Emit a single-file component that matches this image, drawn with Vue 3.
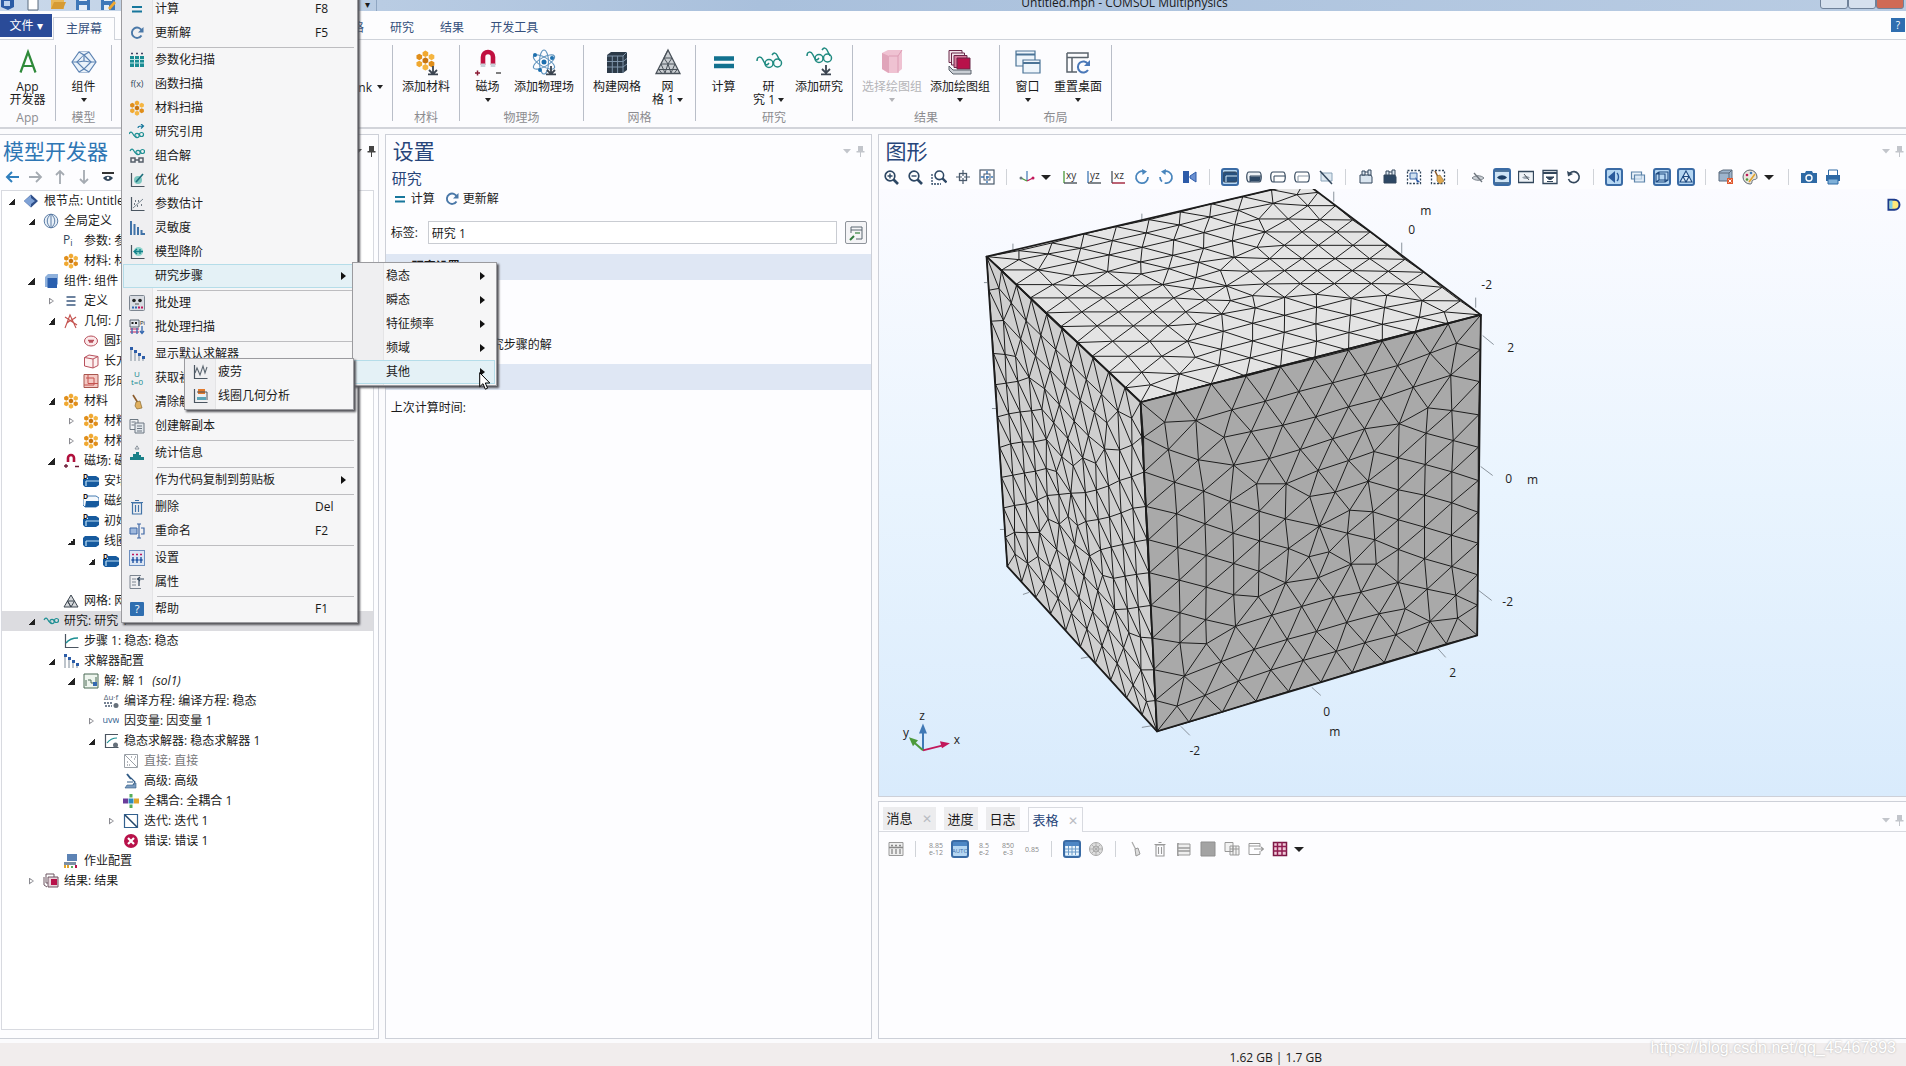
<template>
  <div class="app">
    <!-- Title bar -->
    <header class="titlebar">
      <div class="quick">
        <svg v-for="q in quick" :key="q" class="ic" viewBox="0 0 16 16" v-html="icons[q]"></svg>
      </div>
      <span class="quick-more">▾</span>
      <h1>Untitled.mph - COMSOL Multiphysics</h1>
      <div class="win-btns">
        <button aria-label="最小化"></button>
        <button aria-label="还原"></button>
        <button class="close" aria-label="关闭"></button>
      </div>
    </header>

    <!-- Ribbon tabs -->
    <nav class="tabs">
      <button class="file">文件 ▾</button>
      <button v-for="(t, i) in tabs" :key="t" :class="['tab', { active: i === 0 }]">{{ t }}</button>
      <button class="help" aria-label="帮助">?</button>
    </nav>

    <!-- Ribbon -->
    <div class="ribbon">
      <section v-for="(g, i) in ribbon" :key="i" :class="['group', { wide: g.wide }]">
        <div class="group-body">
          <button v-for="b in g.items" :key="b.lines[0]" :class="['big', { off: b.off }]" :disabled="b.off">
            <svg v-if="b.icon" class="ic26" viewBox="0 0 26 26" v-html="icons[b.icon]"></svg>
            <span v-for="(l, n) in b.lines" :key="n" class="line">{{ l }}<i v-if="b.inline && n === 1" class="caret"></i></span>
            <i v-if="b.drop" class="caret below"></i>
          </button>
        </div>
        <div class="group-name">{{ g.name }}</div>
      </section>
    </div>

    <main class="work">
      <!-- Model builder -->
      <section class="panel">
        <div class="panel-head">
          <h2 class="light">模型开发器</h2>
          <svg class="pins dark" viewBox="0 0 24 12" v-html="icons.pins"></svg>
        </div>
        <div class="toolbar">
          <button v-for="n in ['left', 'right', 'up', 'down', 'show']" :key="n" class="tool" :aria-label="n">
            <svg class="ic" viewBox="0 0 16 16" v-html="icons[n]"></svg>
          </button>
        </div>
        <ul class="tree">
          <li v-for="(n, i) in tree" :key="i" :class="{ sel: n[4] === 'sel', off: n[4] === 'off' }" :style="{ paddingLeft: n[0] * 20 + 2 + 'px' }">
            <i :class="['fold', n[1]]"></i>
            <svg class="ic" viewBox="0 0 16 16" v-html="icons[n[2]]"></svg>
            <span>{{ n[3] }}</span><em v-if="n[2] === 'sol'">(sol1)</em>
          </li>
        </ul>
      </section>

      <!-- Settings -->
      <section class="panel settings">
        <div class="panel-head">
          <h2>设置</h2>
          <svg class="pins" viewBox="0 0 24 12" v-html="icons.pins"></svg>
        </div>
        <h3>研究</h3>
        <div class="actions">
          <button><svg class="ic" viewBox="0 0 16 16" v-html="icons.eq"></svg>计算</button>
          <button><svg class="ic" viewBox="0 0 16 16" v-html="icons.refresh"></svg>更新解</button>
        </div>
        <div class="label-row">
          <label for="study-label">标签:</label>
          <input id="study-label" v-model="label" type="text">
          <button class="rename" aria-label="标签选项">
            <svg class="ic" viewBox="0 0 16 16" v-html="icons.labelopt"></svg>
          </button>
        </div>
        <h4>研究设置</h4>
        <div class="checks">
          <label v-for="c in checks" :key="c.text"><input v-model="c.on" type="checkbox">{{ c.text }}</label>
        </div>
        <h4>信息</h4>
        <p class="info">上次计算时间:</p>
      </section>

      <div class="right">
        <!-- Graphics -->
        <section class="panel graphics">
          <div class="panel-head">
            <h2>图形</h2>
            <svg class="pins" viewBox="0 0 24 12" v-html="icons.pins"></svg>
          </div>
          <div class="toolbar">
            <template v-for="(n, i) in gfxTools" :key="i">
              <i v-if="n === '|'" class="tsep"></i>
              <i v-else-if="n === 'v'" class="tdrop"></i>
              <button v-else class="tool" :aria-label="n">
                <svg :class="['ic', { on: gfxOn.includes(n) }]" viewBox="0 0 16 16" v-html="icons[n]"></svg>
              </button>
            </template>
          </div>
          <div class="canvas">
            <svg viewBox="878 189 1028 606">
              <g stroke="#8a939c" stroke-width="1">
                <line v-for="(t, i) in ticks" :key="i" :x1="t[0]" :y1="t[1]" :x2="t[2]" :y2="t[3]" />
              </g>
              <g v-for="f in meshFaces" :key="f.fill" stroke="#1c1c1c" stroke-linejoin="round">
                <path :d="f.outline" :fill="f.fill" stroke="none" />
                <path :d="f.lines" fill="none" stroke-width="1" />
                <path :d="f.outline" fill="none" stroke-width="1.8" />
              </g>
              <g font-size="12" fill="#222" text-anchor="middle">
                <text v-for="(t, i) in axisText" :key="i" :x="t[1]" :y="t[2] + 4">{{ t[0] }}</text>
              </g>
              <!-- Axis triad -->
              <g stroke-width="2">
                <path d="M922 750V732" stroke="#3f78b5" />
                <path d="M922 750l20-5" stroke="#c2185b" />
                <path d="M922 750l-8-7" stroke="#4c9a3a" />
              </g>
              <path d="M922 723l4 10h-8z" fill="#3f78b5" />
              <path d="M949 743l-10-2 2 7z" fill="#c2185b" />
              <path d="M908 737l9 3-5 6z" fill="#4c9a3a" />
              <!-- Legend toggle -->
              <path d="M1888 199h6a5 5 0 0 1 0 10h-6z" fill="#ffe97a" stroke="#1b3a8c" stroke-width="2" />
              <path d="M1889 200h3v8h-3z" fill="#7fd0e8" />
            </svg>
          </div>
        </section>

        <!-- Messages / table -->
        <section class="panel output">
          <div class="out-tabs">
            <button v-for="t in outTabs" :key="t.name" :class="{ active: t.name === '表格' }">{{ t.name }}<span v-if="t.close">✕</span></button>
            <svg class="pins" viewBox="0 0 24 12" v-html="icons.pins"></svg>
          </div>
          <div class="toolbar">
            <template v-for="(n, i) in outTools" :key="i">
              <i v-if="n === '|'" class="tsep"></i>
              <i v-else-if="n === 'v'" class="tdrop"></i>
              <button v-else class="tool" :aria-label="n">
                <svg :class="['ic', { on: n === 'tauto' || n === 'tgrid' }]" viewBox="0 0 16 16" v-html="icons[n]"></svg>
              </button>
            </template>
          </div>
        </section>
      </div>
    </main>

    <footer class="status">
      <span>1.62 GB | 1.7 GB</span>
      <small>https://blog.csdn.net/qq_45467893</small>
    </footer>

    <!-- Context menu and its submenus -->
    <ul class="menu main-menu">
      <template v-for="(m, i) in menu" :key="i">
        <li v-if="m === '-'" class="msep"></li>
        <li v-else>
          <button :class="{ hot: m[1] === '研究步骤' }">
            <svg class="ic" viewBox="0 0 16 16" v-html="icons[m[0]]"></svg>
            <span class="mtext">{{ m[1] }}</span>
            <span v-if="m[2] && m[2] !== '>'" class="key">{{ m[2] }}</span>
            <i v-if="m[2] === '>'" class="more"></i>
          </button>
        </li>
      </template>
    </ul>
    <ul class="menu step-menu">
      <li v-for="s in steps" :key="s">
        <button :class="{ hot: s === '其他' }">
          <svg class="ic" viewBox="0 0 16 16"></svg>
          <span class="mtext">{{ s }}</span>
          <i class="more"></i>
        </button>
      </li>
    </ul>
    <ul class="menu other-menu">
      <li><button><svg class="ic" viewBox="0 0 16 16" v-html="icons.fatigue"></svg><span class="mtext">疲劳</span></button></li>
      <li><button><svg class="ic" viewBox="0 0 16 16" v-html="icons.coilgeo"></svg><span class="mtext">线圈几何分析</span></button></li>
    </ul>
    <svg class="pointer" viewBox="0 0 12 18"><path d="M.7.7v14l3.300-3 2.300 5.500 2.300-1-2.300-5.200h4.500z" fill="#fff" stroke="#000" /></svg>
  </div>
</template>

<script setup>
import { ref } from 'vue';

const label = ref('研究 1');
const checks = ref([
  { text: '生成默认绘图', on: true },
  { text: '生成收敛图', on: true },
  { text: '存储所有中间研究步骤的解', on: false }
]);

const quick = ['logo', 'doc', 'folder', 'save', 'saveas'];
const tabs = ['主屏幕', '定义', '几何', '材料', '物理场', '网格', '研究', '结果', '开发工具'];

const ribbon = [
  { name: 'App', items: [{ icon: 'bApp', lines: ['App', '开发器'] }] },
  { name: '模型', items: [{ icon: 'bComp', lines: ['组件'], drop: true }] },
  { name: '', wide: true, items: [{ lines: ['LiveLink'], drop: true }] },
  { name: '材料', items: [{ icon: 'bMat', lines: ['添加材料'] }] },
  { name: '物理场', items: [{ icon: 'bMagnet', lines: ['磁场'], drop: true }, { icon: 'bAtom', lines: ['添加物理场'] }] },
  { name: '网格', items: [{ icon: 'bBuild', lines: ['构建网格'] }, { icon: 'bMesh', lines: ['网', '格 1'], inline: true }] },
  { name: '研究', items: [{ icon: 'bEq', lines: ['计算'] }, { icon: 'bStudy', lines: ['研', '究 1'], inline: true }, { icon: 'bAddStudy', lines: ['添加研究'] }] },
  { name: '结果', items: [{ icon: 'bSel', lines: ['选择绘图组'], drop: true, off: true }, { icon: 'bPlot', lines: ['添加绘图组'], drop: true }] },
  { name: '布局', items: [{ icon: 'bWin', lines: ['窗口'], drop: true }, { icon: 'bReset', lines: ['重置桌面'], drop: true }] }
];

// [level, fold, icon, text, state]
const tree = [
  [0, 'open', 'root', '根节点: Untitled.mph (root)'],
  [1, 'open', 'globe', '全局定义'],
  [2, '', 'pi', '参数: 参数 1'],
  [2, '', 'mat', '材料: 材料'],
  [1, 'open', 'comp', '组件: 组件 1 (comp1)'],
  [2, 'shut', 'defs', '定义'],
  [2, 'open', 'geom', '几何: 几何 1'],
  [3, '', 'torus', '圆环: 圆环 1'],
  [3, '', 'block', '长方体: 长方体 1'],
  [3, '', 'union', '形成联合体'],
  [2, 'open', 'mat', '材料'],
  [3, 'shut', 'mat', '材料: 材料 1'],
  [3, 'shut', 'mat', '材料: 材料 2'],
  [2, 'open', 'magnet', '磁场: 磁场 (mf)'],
  [3, '', 'domD', '安培定律 1'],
  [3, '', 'bndD', '磁绝缘 1'],
  [3, '', 'domD', '初始值 1'],
  [3, 'open', 'dom', '线圈 1'],
  [4, 'open', 'domD', '几何分析 1'],
  [5, '', 'dom', '输入 1'],
  [2, '', 'mesh', '网格: 网格 1'],
  [1, 'open', 'study', '研究: 研究 1', 'sel'],
  [2, '', 'step', '步骤 1: 稳态: 稳态'],
  [2, 'open', 'solver', '求解器配置'],
  [3, 'open', 'sol', '解: 解 1'],
  [4, '', 'compile', '编译方程: 编译方程: 稳态'],
  [4, 'shut', 'depvar', '因变量: 因变量 1'],
  [4, 'open', 'statsol', '稳态求解器: 稳态求解器 1'],
  [5, '', 'direct', '直接: 直接', 'off'],
  [5, '', 'adv', '高级: 高级'],
  [5, '', 'coupled', '全耦合: 全耦合 1'],
  [5, 'shut', 'iter', '迭代: 迭代 1'],
  [5, '', 'error', '错误: 错误 1'],
  [2, '', 'job', '作业配置'],
  [1, 'shut', 'results', '结果: 结果']
];

const menu = [
  ['eq', '计算', 'F8'], ['refresh', '更新解', 'F5'], '-',
  ['sweep', '参数化扫描'], ['fx', '函数扫描'], ['mat', '材料扫描'], ['studyref', '研究引用'],
  ['combine', '组合解'], ['optim', '优化'], ['estim', '参数估计'], ['sens', '灵敏度'],
  ['reduce', '模型降阶'], ['', '研究步骤', '>'], '-',
  ['batch', '批处理'], ['batchsweep', '批处理扫描'], '-',
  ['solver', '显示默认求解器'], ['getinit', '获取初始值'], ['broom', '清除解'], ['copy', '创建解副本'], '-',
  ['stats', '统计信息'], '-',
  ['', '作为代码复制到剪贴板', '>'], '-',
  ['trash', '删除', 'Del'], ['rename', '重命名', 'F2'], '-',
  ['setting', '设置'], ['props', '属性'], '-',
  ['help', '帮助', 'F1']
];
const steps = ['稳态', '瞬态', '特征频率', '频域', '其他'];

const gfxTools = ['zin', 'zout', 'zbox', 'zext', 'zfit', '|', 'axes', 'v', 'vxy', 'vyz', 'vxz', 'rotl', 'rotr', 'cam', '|',
  'selDom', 'selDom2', 'selBnd', 'selEdge', 'selNone', '|', 'clipA', 'clipB', 'selBox', 'selBrush', '|',
  'hide', 'showSel', 'hideSel', 'viewHid', 'resetHid', '|', 'light', 'transp', 'wire', 'meshRen', '|',
  'scene', 'palette', 'v', '|', 'photo', 'print'];
const gfxOn = ['selDom', 'showSel', 'light', 'wire', 'meshRen'];
const outTabs = [{ name: '消息', close: true }, { name: '进度' }, { name: '日志' }, { name: '表格', close: true }];
const outTools = ['tprec', '|', 'tfull', 'tauto', 'tsci', 'teng', 'tdec', '|', 'tgrid', 'tpolar', '|',
  'tbroom', 'ttrash', 'trows', 'tfill', 'tcopy', 'texport', 'tred', 'v'];

const axisText = [
  ['m', 1425, 210], ['0', 1411, 229], ['-2', 1486, 284], ['2', 1510, 347], ['0', 1508, 478], ['m', 1532, 479],
  ['-2', 1507, 602], ['2', 1452, 673], ['0', 1326, 712], ['m', 1334, 732], ['-2', 1194, 751],
  ['z', 921, 716], ['y', 905, 733], ['x', 956, 740]
];
const ticks = [
  [1333, 191, 1333, 201], [1401, 242, 1401, 253], [1475, 297, 1475, 307], [1482, 335, 1493, 344],
  [1480, 466, 1492, 475], [1478, 590, 1491, 600], [1437, 648, 1445, 657], [1311, 687, 1320, 695],
  [1180, 726, 1189, 735], [1141, 727, 1153, 725], [1080, 658, 1090, 656], [1022, 594, 1028, 592],
  [999, 529, 1003, 529], [991, 408, 995, 408], [983, 282, 986, 282], [1012, 243, 1012, 250], [1141, 213, 1141, 220]
];

// Corners of the faces, clockwise from the upper left
const frontFace = [[522, 695], [1458, 433], [1448, 1395], [567, 1683]];
const topFace = [[98, 258], [972, 34], [1458, 433], [522, 695]];
const leftFace = [[98, 258], [522, 695], [567, 1683], [155, 1188]];

// Mesh nodes, x y pairs
const frontNodes = `522 695 617 668 716 640 812 617 907 589 1001 565 1094 539 1187 512 1277 486 1368 460 1458 433
1456 537 1454 633 1452 733 1451 830 1451 930 1450 1025 1450 1118 1449 1213 1449 1304 1448 1395
567 1683 655 1655 747 1625 839 1592 929 1563 1018 1535 1104 1506 1192 1476 1280 1448 1363 1420
530 800 531 904 537 1008 543 1108 546 1207 550 1305 554 1403 558 1498 562 1590
588 755 674 750 773 718 865 692 957 663 1050 637 1140 611 1229 585 1318 548 1391 518
1375 614 1272 650 1183 684 1094 709 1004 739 913 764 826 783 751 800
1312 712 1378 720 1233 760 1138 775 1050 805 961 837 876 864 778 884 681 868 598 837
1307 788 1382 810 1164 843 1231 862 1305 882 1378 904 1094 870 1010 900 922 940 841 940
615 935 695 962 768 993 1148 932 1231 958 1303 974 1378 997 1057 965 987 978 848 1022 920 1045 1013 1067
1097 1019 1161 1024 1231 1048 1303 1070 1377 1094 621 1030 699 1060 776 1088 849 1111 929 1134
985 1159 1041 1144 1091 1088 1166 1108 1231 1137 1303 1165 1378 1188 624 1131 702 1155 778 1179 847 1202
921 1237 1011 1222 1101 1181 1170 1181 1230 1236 1310 1256 1389 1274 628 1229 702 1250 778 1273 846 1279
883 1334 965 1308 1052 1281 1128 1265 1250 1315 1178 1330 1089 1356 1006 1383 925 1407 834 1437
783 1368 701 1348 630 1327 630 1417 703 1420 642 1517 743 1474 791 1532 699 1575 622 1607
880 1499 969 1470 1060 1443 1139 1417 1224 1393 1318 1353 1394 1343`;

const topNodes = `98 258 187 240 278 217 366 190 455 168 545 147 631 124 716 99 803 78 882 57 972 34
1010 65 1058 105 1105 148 1153 184 1201 224 1249 266 1301 305 1351 350 1401 391 1458 433
617 668 716 640 812 617 907 589 1001 565 1094 539 1187 512 1277 486 1368 460
140 298 178 342 218 382 261 427 302 468 345 516 388 557 434 605 479 652 522 695
187 267 267 250 240 298 347 273 357 233 444 210 537 187 628 163 712 139 791 119 886 98 952 72
435 253 335 315 431 303 522 274 526 230 613 208 696 186 781 162 847 145 928 145 982 105 1015 147
610 254 695 233 774 211 864 184 966 184 1061 184 599 294 682 275 779 260 842 230 917 224 1011 224 1106 224
523 310 674 321 741 299 877 264 966 264 1057 264 1152 264
280 342 370 346 481 344 583 342 665 355 758 346 823 302 918 300 1008 300 1104 300 1203 302
320 382 419 382 518 382 613 382 700 388 769 390 865 340 961 339 1055 339 1157 339 1252 340
360 424 461 424 555 424 646 424 745 430 837 412 830 375 918 380 1005 371 1101 383 1199 374 1296 390
402 466 502 466 597 466 676 460 749 482 830 458 918 434 1006 410 1099 434 1193 411 1289 440 1357 424
445 512 547 512 651 512 917 485 1004 460 1187 461 1095 486 830 511 743 536 911 537 1006 512
487 557 580 557 672 560 737 584 823 562 525 605 629 610 549 643`;

const lerp = (a, b, t) => a + (b - a) * t;

function toPoints(text) {
  const n = text.trim().split(/\s+/).map(Number);
  const out = [];
  for (let i = 0; i < n.length; i += 2) out.push([n[i], n[i + 1]]);
  return out;
}

// Face position for unit coordinates
function project([a, b, c, d], [u, v]) {
  return [0, 1].map(k => lerp(lerp(a[k], b[k], u), lerp(d[k], c[k], u), v));
}

// Unit coordinates of a face position, by fixed-point iteration
function unproject([a, b, c, d], [x, y]) {
  let u = 0.5;
  let v = 0.5;
  for (let i = 0; i < 25; i++) {
    const l = lerp(a[0], d[0], v);
    u = (x - l) / (lerp(b[0], c[0], v) - l);
    const t = lerp(a[1], b[1], u);
    v = (y - t) / (lerp(d[1], c[1], u) - t);
  }
  return [u, v];
}

// Bowyer-Watson triangulation, returns index pairs of the edges
function triangulate(points) {
  const p = [...points, [-20, -20], [20, -20], [0, 30]];
  const n = points.length;
  const circle = (a, b, c) => {
    const [ax, ay] = p[a];
    const [bx, by] = p[b];
    const [cx, cy] = p[c];
    const d = 2 * (ax * (by - cy) + bx * (cy - ay) + cx * (ay - by));
    const x = ((ax * ax + ay * ay) * (by - cy) + (bx * bx + by * by) * (cy - ay) + (cx * cx + cy * cy) * (ay - by)) / d;
    const y = ((ax * ax + ay * ay) * (cx - bx) + (bx * bx + by * by) * (ax - cx) + (cx * cx + cy * cy) * (bx - ax)) / d;
    return { v: [a, b, c], x, y, r: (ax - x) ** 2 + (ay - y) ** 2 };
  };
  let tris = [circle(n, n + 1, n + 2)];
  for (let i = 0; i < n; i++) {
    const rim = new Map();
    tris = tris.filter(t => {
      if ((p[i][0] - t.x) ** 2 + (p[i][1] - t.y) ** 2 >= t.r) return true;
      for (let k = 0; k < 3; k++) {
        const e = [t.v[k], t.v[(k + 1) % 3]].sort((m, o) => m - o);
        const key = e.join();
        if (rim.has(key)) rim.delete(key);
        else rim.set(key, e);
      }
      return false;
    });
    rim.forEach(e => tris.push(circle(e[0], e[1], i)));
  }
  const edges = new Map();
  tris.forEach(({ v }) => {
    if (v.some(k => k >= n)) return;
    for (let k = 0; k < 3; k++) {
      const e = [v[k], v[(k + 1) % 3]].sort((m, o) => m - o);
      // skip long slivers that run along the border
      if (Math.hypot(p[e[0]][0] - p[e[1]][0], p[e[0]][1] - p[e[1]][1]) < 0.175) edges.set(e.join(), e);
    }
  });
  return [...edges.values()];
}

const px = ([x, y]) => `${(950 + x / 2.75).toFixed(1)} ${(170 + y / 3).toFixed(1)}`;

function buildFace(face, fill, uv, at) {
  const lines = triangulate(uv).map(([a, b]) => `M${px(at(a))}L${px(at(b))}`).join('');
  return { fill, lines, outline: 'M' + face.map(px).join('L') + 'z' };
}

const front = toPoints(frontNodes);
const top = toPoints(topNodes);
const frontUv = front.map(q => unproject(frontFace, q));
const topUv = top.map(q => unproject(topFace, q));
const leftUv = frontUv.map(([u, v]) => [1 - u, v]);

const meshFaces = [
  buildFace(topFace, '#e4e4e4', topUv, i => top[i]),
  buildFace(leftFace, '#cfcfcf', leftUv, i => project(leftFace, leftUv[i])),
  buildFace(frontFace, '#a9a9a9', frontUv, i => front[i])
];

// Shared icon pieces
const hex = (x, y, r, c) => `<path d="M${x} ${y - r}l${r * 0.87} ${r / 2}v${r}l${-r * 0.87} ${r / 2}l${-r * 0.87} ${-r / 2}v${-r}z" fill="${c}"/>`;
const plot = '<path d="M2.500 1v13.500h13" fill="none" stroke="#4a5560" stroke-width="1.200"/>';
const glasses = '<path d="M1 7c1.500-3 3-2 4 0s2 3 3.500 2" fill="none" stroke="#1d8f93" stroke-width="1.200"/><circle cx="9" cy="8.500" r="2.200" fill="none" stroke="#1d8f93" stroke-width="1.200"/><circle cx="13.500" cy="7.500" r="2" fill="none" stroke="#1d8f93" stroke-width="1.200"/>';
const glasses26 = '<g fill="none" stroke="#1f8a80" stroke-width="1.500"><path d="M1 12c0-5 4-5 6-1s3 7 6 3"/><circle cx="13" cy="14.500" r="4"/><circle cx="21.500" cy="14" r="4"/><path d="M16 6c2-3 4-2 5 0l3 6"/></g>';
const cyl = (a, b) => `<path d="M2 3h11l3 2v7l-3 2H2l-2-2V5z" fill="${a}"/><path d="M3 8h13M3 8v5" stroke="${b}" stroke-width="1.200"/>`;
const arrowDown = '<path d="M20 17v7M16 21l4 4 4-4M15 25.400h10" fill="none" stroke="#3b4450" stroke-width="1.800"/>';
const note = (t, c, s, y) => `<text x="8" y="${y}" text-anchor="middle" font-size="${s}" fill="${c}">${t}</text>`;
const mag = '<circle cx="7" cy="7" r="4.800" fill="#fff" stroke="#2d4764" stroke-width="1.700"/><path d="M10.500 10.500l4.500 4.500" stroke="#2d4764" stroke-width="2.600"/>';
const tube = (f, g) => `<path d="M3 3h10c3 0 3 10 0 10H3c-3 0-3-10 0-10z" fill="${f}" stroke="#33475c" stroke-width="1.200"/><path d="M4 7h11M4 7v6" stroke="${g}" fill="none"/>`;
const dash = '<rect x="1.500" y="1.500" width="13" height="13" fill="none" stroke="#33475c" stroke-width="1.300" stroke-dasharray="2 1.500"/>';
const clip = f => `<path d="M2 6h11l1 2v6H2z" fill="${f}" stroke="#33475c"/><path d="M4 2h3v4H4zM10 1h3v5h-3zM7 3h3" fill="#dbe6f0" stroke="#33475c"/>`;
// seven cubes, packed with small gaps
const hexes = hex(8, 2.900, 2.500, '#f0a830') + hex(3.300, 5.300, 2.500, '#e08e1a') + hex(12.700, 5.300, 2.500, '#f5b541') + hex(8, 8.100, 2.500, '#c87510')
  + hex(3.300, 10.700, 2.500, '#f0a830') + hex(12.700, 10.700, 2.500, '#e08e1a') + hex(8, 13.300, 2.500, '#f5b541');

const icons = {
  '': '',
  // title bar
  logo: '<path d="M1 3l7-3 6 4v8l-6 3-7-3z" fill="#2b5ca5"/><path d="M4 6h6v5H4z" fill="#bcd3ee"/>',
  doc: '<path d="M3 0h10v15H3z" fill="#fff" stroke="#5a6a7c"/>',
  folder: '<path d="M1 3h5l2 2h6v9H1z" fill="#e8b85a"/><path d="M1 14l3-7h12l-3 7z" fill="#d69b34"/>',
  save: '<path d="M1 1h14v14H1z" fill="#3f78b8"/><path d="M4 1h8v5H4zM4 10h8v5H4z" fill="#e4eef8"/>',
  saveas: '<path d="M1 1h14v14H1z" fill="#3f78b8"/><path d="M4 1h8v5H4zM4 10h5v5H4z" fill="#e4eef8"/><path d="M8 13l6-7 2 2-6 7z" fill="#f0a830"/>',
  pins: '<path d="M0 4h8l-4 4.500z" fill="currentColor"/><path d="M15 1h5v5h1.500v1.500H18V12h-1V7.500h-3.500V6H15z" fill="currentColor"/>',
  // model builder toolbar
  left: '<path d="M8 3L3 8l5 5M3 8h12" fill="none" stroke="#2f7fbd" stroke-width="2"/>',
  right: '<path d="M8 3l5 5-5 5M13 8H1" fill="none" stroke="#a5abb2" stroke-width="1.800"/>',
  up: '<path d="M4 6l4-4 4 4M8 2v13" fill="none" stroke="#a5abb2" stroke-width="1.800"/>',
  down: '<path d="M4 10l4 4 4-4M8 14V1" fill="none" stroke="#a5abb2" stroke-width="1.800"/>',
  show: '<path d="M2 4h12" stroke="#333" stroke-width="2"/><path d="M3 9c3-3 7-3 10 0-3 4-7 4-10 0z" fill="#33475c"/><circle cx="8" cy="9" r="1.300" fill="#fff"/>',
  // context menu
  eq: '<path d="M3 6h10M3 10.500h10" stroke="#17779c" stroke-width="2.200"/>',
  refresh: '<path d="M12.500 10.500a5.200 5.200 0 1 1 .5-4.500" fill="none" stroke="#4a78a8" stroke-width="1.900"/><path d="M14.500 2v5.500H9z" fill="#4a78a8"/>',
  sweep: '<path d="M1 4h4v11H1zM6 4h4v11H6zM11 4h4v11h-4z" fill="#1a8c93"/><path d="M1 7.500h14M1 11h14" stroke="#b9e3e3"/><path d="M2 1.500h2M7 1.500h2M12 1.500h2" stroke="#446" stroke-width="1.500"/>',
  fx: note('f(x)', '#33475c', 9, 11),
  mat: hexes,
  studyref: '<g transform="translate(-1 3)">' + glasses + '</g><path d="M9 4c0-2 2-2 5-2M12 0l2.500 2L12 4.500" fill="none" stroke="#17779c" stroke-width="1.200"/>',
  combine: '<g transform="translate(0 -4)">' + glasses + '</g><path d="M2 10h4v4H2zM10 10h4v4h-4zM6 12h4" fill="none" stroke="#555f6a" stroke-width="1.500"/>',
  optim: plot + '<circle cx="9" cy="8" r="4" fill="#7cc6c0"/><path d="M7 10l7-8" stroke="#1d6f7c" stroke-width="1.600"/>',
  estim: plot + '<path d="M4 12l10-9" stroke="#7a8791"/><path d="M6 5h1M9 5h1M8 10h1M12 9h1M5 8h1" stroke="#4a5560" stroke-width="1.300"/>',
  sens: '<path d="M1 1h2v14H1zM4.500 4h2v11h-2zM8 7h2v8H8zM11.500 10h2v5h-2z" fill="#4173a8"/><path d="M13 13h3v2h-3z" fill="#4173a8"/>',
  reduce: plot + '<circle cx="9.500" cy="7.500" r="4.500" fill="#8fd4cc"/><path d="M5 7.500h9M8 5L5 7.500 8 10M11 5v5" fill="none" stroke="#12808a" stroke-width="1.300"/>',
  batch: '<rect x=".5" y=".5" width="15" height="15" rx="1" fill="#d9dce2" stroke="#7c8590"/><circle cx="5" cy="5.500" r="1.800" fill="#222"/><circle cx="11" cy="5.500" r="1.800" fill="#222"/><path d="M6 9h4" stroke="#555"/><path d="M3 12.500h2M6 12.500h2" stroke="#3568b0" stroke-width="2"/><path d="M9 12.500h2M12 12.500h2" stroke="#c2185b" stroke-width="2"/>',
  batchsweep: '<path d="M1 1h9v7H1z" fill="#e3e6ec" stroke="#5a6470"/><path d="M2.500 4h2M6 4h2" stroke="#222" stroke-width="2"/><text x="11" y="6" font-size="6" fill="#222">Pi</text><path d="M1 10h9M1 13h9" stroke="#c2185b"/><path d="M3 9v6M8 9v6M13 7v7M11 12l2 2.500 2-2.500" fill="none" stroke="#3568b0" stroke-width="1.300"/>',
  solver: '<path d="M2 4v11M6 6v9M10 9v6M14 12v3" stroke="#9aa5b0" stroke-width="1.300"/><path d="M1 1h3v3H1zM5 4h3v3H5zM9 7h3v3H9zM13 10h3v3h-3z" fill="#2c5da8"/>',
  getinit: note('U', '#158a8f', 8, 7) + note('t=0', '#158a8f', 8, 15),
  broom: '<path d="M4 1l5 8" stroke="#8a5a2a" stroke-width="1.600"/><path d="M7 8l4-1 2 7-5 1-2-3z" fill="#e0b060" stroke="#8a6a30" stroke-width=".7"/>',
  copy: '<path d="M1 1.500h8v10H1z" fill="#eef1f4" stroke="#6c7782"/><path d="M6 5h9v10H6z" fill="#e2e7ec" stroke="#6c7782"/><path d="M8 8h5M8 10.500h5M8 13h5M2.500 4h4M2.500 7h3" stroke="#6c7782"/>',
  stats: '<path d="M8 .8l2 3.200H6z" fill="none" stroke="#8a939c"/><path d="M1 15v-3h3V9h3V7h3v3h2v2h3v3z" fill="#1a8088"/>',
  trash: '<path d="M3.500 4h9v11h-9zM2 3.500h12M6 1.500h4M6.500 6v7M9.500 6v7" fill="none" stroke="#4173a8" stroke-width="1.200"/>',
  rename: '<path d="M1 5h7v6H1z" fill="#9fb8dc" stroke="#3d66a5"/><path d="M12 5h3v6h-3M10 1v14M8 1h4M8 15h4" fill="none" stroke="#3d66a5" stroke-width="1.200"/>',
  setting: '<rect x=".5" y=".5" width="15" height="15" fill="#dce6f4" stroke="#6d8fc0"/><path d="M3 4.500h2M7 4.500h2M11 4.500h2" stroke="#c2185b" stroke-width="1.500"/><path d="M4 7v6M8 7v6M12 7v6" stroke="#2c5da8" stroke-width="1.500"/><path d="M2.500 10h3M6.500 10h3M10.500 10h3" stroke="#2c5da8" stroke-width="2"/>',
  props: '<path d="M12 1.500H1v13h11" fill="none" stroke="#7c8590"/><path d="M3 5h4M3 8h4M3 11h4" stroke="#7c8590"/><path d="M15 5H9M11 3L8.500 5 11 7M10 5v7" fill="none" stroke="#33475c" stroke-width="1.200"/>',
  help: '<rect x="1" y="1" width="14" height="14" rx="1" fill="#2f6eb0"/>' + note('?', '#fff', 11, 12),
  fatigue: plot + '<path d="M3 9l2-5 3 7 3-9 2 7 2-6" fill="none" stroke="#5b6670" stroke-width="1.100"/>',
  coilgeo: plot + '<path d="M6 1h7v5H6z" fill="#e27a2c"/><path d="M5 9h9v3H5z" fill="#5aa5b8"/><path d="M5 4h10v8" fill="none" stroke="#4a5560"/>',
  // tree
  root: '<path d="M8 1.500l7 6.500-7 6.500L1 8z" fill="#2f4f8a"/><path d="M1 8l7-6v12zM8 5l4 3-4 3z" fill="#7fa2d6"/>',
  globe: '<circle cx="8" cy="8" r="6.800" fill="#e8f0f8" stroke="#5c7da5"/><path d="M8 1v14M8 1C3 5 3 11 8 15M8 1c5 4 5 10 0 14" fill="none" stroke="#5c7da5"/>',
  pi: '<text x="0" y="11" font-size="12" fill="#33475c">P<tspan font-size="9" dy="2">i</tspan></text>',
  comp: '<path d="M2 4l3-3h10v10l-3 3H2z" fill="#8fb1dc"/><path d="M4.500 5H14v10H4.500z" fill="#2a5fae"/>',
  defs: '<path d="M3.500 4h9M3.500 8h9M3.500 12h9" stroke="#3d5a80" stroke-width="1.500"/>',
  geom: '<path d="M2 15L7 2l6 13M2 4l12 8M4 10c3-3 6-3 9-6" fill="none" stroke="#c4524e" stroke-width="1.100"/>',
  torus: '<ellipse cx="8" cy="8" rx="6.500" ry="5" fill="#fbe9ea" stroke="#b8505c"/><path d="M5 7.500h6M6 9h4" stroke="#b8505c" stroke-width="1.300"/>',
  block: '<path d="M1.500 4.500L6 2l9 1.500v9L10 15l-8.500-2zM1.500 4.500L10 6v9M10 6l5-2.500" fill="#fdf1f1" stroke="#b8505c"/>',
  union: '<path d="M1 1.500h14v13H1z" fill="#f4c9c4" stroke="#a8564e"/><path d="M5 1.500v9h10M1 12h10V5H3" fill="none" stroke="#c4524e"/>',
  magnet: '<path d="M5 9V5a3 3 0 0 1 6 0v4" fill="none" stroke="#b0103c" stroke-width="2.600"/><path d="M1 13h4M3 11v4M12 13.500h4" stroke="#6b1a35" stroke-width="1.300"/>',
  dom: cyl('#165a9e', '#bfe0f5'),
  domD: cyl('#165a9e', '#bfe0f5') + '<path d="M0 0h5v6H0z" fill="#fff"/><text x="0" y="6" font-size="7" font-weight="700" fill="#111">D</text>',
  bndD: '<path d="M2 3h11l3 2v7l-3 2H2l-2-2V5z" fill="#f4f8fc" stroke="#165a9e" stroke-width=".8"/><path d="M3 8h13v4l-3 2H2z" fill="#165a9e"/><path d="M0 0h5v6H0z" fill="#fff"/><text x="0" y="6" font-size="7" font-weight="700" fill="#111">D</text>',
  mesh: '<path d="M8 2l7 12H1zM4.500 8h7l-3.500 6zM4.500 8L8 14" fill="#d5d8db" stroke="#3d4650"/>',
  study: glasses,
  step: plot + '<path d="M3 10c3-4 6-5 12-5" fill="none" stroke="#1d8f93" stroke-width="1.300"/>',
  sol: '<path d="M1 1h14v14H1z" fill="#eef5ee" stroke="#4a6a55"/><path d="M3 13V7M5 7h3v3M8 10h3v3M13 4v9" fill="none" stroke="#4a6a55"/><path d="M10 9h4v4h-4z" fill="#3568b0"/>',
  compile: note('Δu·f', '#4a5a70', 8, 7) + '<path d="M1 10h9M2 13h7" stroke="#4a5a70" stroke-width="1.300" stroke-dasharray="2 1"/><circle cx="13" cy="12.500" r="2.500" fill="#66707a"/>',
  depvar: note('uvw', '#33618f', 9, 10),
  statsol: plot + '<path d="M2 1.500h13" stroke="#4a5560"/><path d="M4 10c3-4 6-5 10-5" fill="none" stroke="#1d8f93" stroke-width="1.200"/><circle cx="12.500" cy="12" r="2.500" fill="#66707a"/>',
  direct: '<path d="M1.500 1.500h13v13h-13z" fill="none" stroke="#9aa0a6"/><path d="M2 2l12 12" stroke="#9aa0a6"/><path d="M8 4h1M11 6h1M4 9h1M6 12h1M12 4h1M4 12h1" stroke="#9aa0a6" stroke-width="1.400"/>',
  adv: '<path d="M4 1l4 5" stroke="#2f5a85" stroke-width="2"/><path d="M8 5l4 4-2 3M4 9h6" fill="none" stroke="#2f5a85" stroke-width="1.200"/><path d="M2 15l2-3h6l3-2v5z" fill="#7b9cc0" stroke="#2f5a85" stroke-width=".6"/>',
  coupled: '<path d="M0 5.500h5v5H0z" fill="#6a3d9a"/><path d="M5.500 5.500h5v5h-5z" fill="#2e8ac0"/><path d="M11 5.500h5v5h-5z" fill="#e0a52c"/><path d="M6.500 1h3v3.500h-3zM6.500 11.500h3V15h-3z" fill="#57ad5a"/>',
  iter: '<path d="M1.500 1.500h13v13h-13z" fill="#fff" stroke="#33618f" stroke-width="1.200"/><path d="M2 2l12 12" stroke="#1f4468" stroke-width="1.500"/>',
  error: '<circle cx="8" cy="8" r="7" fill="#b8124a"/><path d="M5 5l6 6M11 5l-6 6" stroke="#fff" stroke-width="2.200"/>',
  job: '<path d="M4 1h10v7H4z" fill="#5c83b5"/><path d="M1 9h12v3H1z" fill="#7c8fa5"/><path d="M2 12v3M5 12v3" stroke="#e0a52c" stroke-width="2"/><path d="M9 13v2" stroke="#57ad5a" stroke-width="2"/><path d="M13 12v3" stroke="#b8124a" stroke-width="2"/>',
  results: '<path d="M3 1h8v9H3zM1 4v8l3 2" fill="none" stroke="#6c5560"/><path d="M5 4h10v10H5z" fill="#e8d5dc" stroke="#6c5560"/><path d="M8 6h6v6H8z" fill="#b8124a"/>',
  labelopt: '<path d="M3 2h11v12H8" fill="none" stroke="#5b6670"/><path d="M3 5h11M3 2v6" stroke="#5b6670"/><path d="M7 8h5" stroke="#7fae85" stroke-width="2"/><path d="M2 15l4-4" stroke="#2f7a3c" stroke-width="2"/>',
  // ribbon
  bApp: '<path d="M5.500 23.500L13 3l7.500 20.500M8 17h10" fill="none" stroke="#2f8a3a" stroke-width="2.200"/>',
  bComp: '<g fill="#eaf2fa" stroke="#5b82b2" stroke-width="1.200"><path d="M1 13L8 3h10l7 10-7 10H8z"/><path d="M13 6l7 7-7 7-7-7z"/><path d="M1 13l6 0M8 3l5 3 5-3M8 23l5-3 5 3M25 13h-5M13 6v6l-6 1M13 12l6 1"/></g>',
  bMat: '<g transform="translate(2 1) scale(1.300)">' + hexes + '</g>' + arrowDown,
  bMagnet: '<path d="M8 16V8a5 5 0 0 1 10 0v8" fill="none" stroke="#c01040" stroke-width="4.600"/><path d="M5.700 14.500h4.600V18H5.700zM15.700 14.500h4.600V18h-4.600z" fill="#c8d0d8"/><path d="M0 24h5M2.500 21.500v5" stroke="#8a1a35" stroke-width="1.500"/><path d="M21 24h5" stroke="#555" stroke-width="1.500"/>',
  bAtom: '<g fill="none" stroke="#5f93bd" stroke-width="1.100"><ellipse cx="13" cy="13" rx="4.500" ry="12"/><ellipse cx="13" cy="13" rx="4.500" ry="12" transform="rotate(60 13 13)"/><ellipse cx="13" cy="13" rx="4.500" ry="12" transform="rotate(-60 13 13)"/></g><circle cx="13" cy="13" r="2.500" fill="#1d6fae"/><circle cx="4" cy="6" r="2" fill="#1d6fae"/><circle cx="21" cy="9" r="2" fill="#1d6fae"/><circle cx="9" cy="21" r="2" fill="#1d6fae"/>' + arrowDown,
  bBuild: '<path d="M3 6l4-3h16v18l-4 3H3z" fill="#2c3a48"/><path d="M3 7h16v17M8.300 7v17M13.600 7v17M3 12.500h16l4-3M3 18h16l4-3M19 7l4-4" fill="none" stroke="#7e93a8"/>',
  bMesh: '<path d="M13 1l12 23.500H1z" fill="#c9cdd1" stroke="#4a525a" stroke-width="1.300"/><path d="M9 9h8M6 15h14M3 20.500h20M13 1L9 9l4 6 4-6M6 15l4 9 3-9 3 9 4-9M3.500 20l3 4M22.500 20l-3 4" fill="none" stroke="#4a525a"/>',
  bEq: '<path d="M3 9.500h20M3 17h20" stroke="#12718f" stroke-width="4.500"/>',
  bStudy: glasses26,
  bAddStudy: '<g transform="translate(0 -5)">' + glasses26 + '</g><path d="M20 16v7M16 20l4 4 4-4M15 25.400h10" fill="none" stroke="#3b4450" stroke-width="1.800"/>',
  bSel: '<path d="M3 4l6-3h14v19l-5 4H9l-6-4z" fill="#efc2d2"/><path d="M3 4l7 3v17l-7-4z" fill="#e0a5ba"/><path d="M10 7h9v17M19 7l4-6" fill="none" stroke="#dc9cb4"/>',
  bPlot: '<g fill="#f2e4ea" stroke="#6b2848"><path d="M2 1.500h13v12H2z"/><path d="M4.500 4h13v12h-13z"/><path d="M7 6.500h13v12H7z" fill="#d77a9c"/><path d="M10 9h13v11H10z" fill="#b8124a"/></g><path d="M2 17l4 4h18v4H6l-4-4z" fill="#c9ced4" stroke="#5a636c"/>',
  bWin: '<g fill="#eef5fb" stroke="#4a7396" stroke-width="1.200"><path d="M1 2h19v15H1z"/><path d="M1 5.500h19" stroke-width="2"/><path d="M8 11h17v13H8z"/><path d="M8 14h17" stroke-width="2"/></g>',
  bReset: '<path d="M2 4h21v5M2 4v19h10M2 8.500h21M7 8.500V23" fill="none" stroke="#5a636c" stroke-width="1.500"/><path d="M23 21a5.500 5.500 0 1 1 0-6" fill="none" stroke="#4a78b8" stroke-width="2"/><path d="M25 11v6h-6z" fill="#4a78b8"/>',
  // graphics toolbar
  zin: mag + '<path d="M4.500 7h5M7 4.500v5" stroke="#2d4764" stroke-width="1.400"/>',
  zout: mag + '<path d="M4.500 7h5" stroke="#2d4764" stroke-width="1.400"/>',
  zbox: '<path d="M1 5v10h9" fill="none" stroke="#2d4764" stroke-width="1.300" stroke-dasharray="2 1"/><g transform="translate(2 0) scale(.9)">' + mag + '</g>',
  zext: '<rect x="4.500" y="4.500" width="7" height="7" fill="none" stroke="#4a5a6c" stroke-width="1.300"/><path d="M8 1v6M8 9v6M1 8h6M9 8h6" stroke="#4a5a6c" stroke-width="1.200"/>',
  zfit: '<rect x="1" y="1" width="14" height="14" fill="none" stroke="#4a5a6c" stroke-width="1.200"/><path d="M8 2v12M2 8h12" stroke="#3b78b8" stroke-dasharray="3 2" stroke-width="1.500"/><rect x="5" y="5" width="6" height="6" fill="none" stroke="#4a5a6c"/>',
  axes: '<path d="M8 12V2" stroke="#3f78b5" stroke-width="1.200"/><path d="M8 12l6-3" stroke="#c2185b" stroke-width="1.300"/><path d="M8 12L2 9" stroke="#4c9a3a" stroke-width="1.300"/><circle cx="14" cy="9" r="1.500" fill="#c2185b"/><circle cx="2" cy="9" r="1.500" fill="#6c7782"/>',
  vxy: '<path d="M2 2v12" stroke="#4c9a3a" stroke-width="1.300"/><path d="M2 14h13" stroke="#4a525a" stroke-width="1.400"/><text x="4" y="10" font-size="10" fill="#333">xy</text>',
  vyz: '<path d="M2 2v12" stroke="#3f78b5" stroke-width="1.300"/><path d="M2 14h13" stroke="#4a525a" stroke-width="1.400"/><text x="4" y="10" font-size="10" fill="#333">yz</text>',
  vxz: '<path d="M2 2v12" stroke="#4a525a" stroke-width="1.300"/><path d="M2 14h13" stroke="#a02038" stroke-width="1.400"/><text x="4" y="10" font-size="10" fill="#333">xz</text>',
  rotl: '<path d="M10 2.500a6 6 0 1 0 4 5.500" fill="none" stroke="#4a86bd" stroke-width="1.700"/><path d="M8 0l5 2.500L8.500 6z" fill="#4a86bd"/>',
  rotr: '<path d="M6 2.500A6 6 0 1 1 2 8" fill="none" stroke="#4a86bd" stroke-width="1.700" stroke-dasharray="22 3"/><path d="M8 0L3 2.500 7.500 6z" fill="#4a86bd"/>',
  cam: '<path d="M1 2h6v12H1z" fill="#2d5ba8"/><path d="M8 7l6-4v10L8 9z" fill="#6a8fd0" stroke="#2d5ba8"/>',
  selDom: tube('#27517f', '#d6ecfa'),
  selDom2: tube('#eef2f6', '#33475c') + '<path d="M4 7.500h10.500V11L13 12.500H4z" fill="#2d4764"/>',
  selBnd: tube('#fff', '#33475c'),
  selEdge: tube('#fff', '#8a97a5'),
  selNone: '<path d="M3 4h11v8H3z" fill="#dfe9f1" stroke="#8aa3b8"/><path d="M2 2l12 13" stroke="#33475c" stroke-width="1.500"/>',
  clipA: clip('#dbe6f0'),
  clipB: clip('#2d4764'),
  selBox: dash + '<path d="M4 4h7v6H4z" fill="#cfe0f0" stroke="#3d66a5"/><path d="M9 8l5 5-3 .5z" fill="#2d5ba8"/>',
  selBrush: dash + '<path d="M5 2l3 6" stroke="#8a5a2a" stroke-width="1.500"/><path d="M7 7l3-1 4 6-4 3-3-3z" fill="#e0a850" stroke="#8a6a30" stroke-width=".6"/>',
  hide: '<path d="M2 9c3-3 9-3 12 0-3 3-9 3-12 0z" fill="#c9ced4" stroke="#7a828a"/><path d="M4 4l8 9" stroke="#6c747c" stroke-width="1.300"/>',
  showSel: '<path d="M0 2h16v12H0z" fill="#cfe4f5" stroke="#27517f" stroke-width="1.500"/><path d="M3 8.500c3-3 7-3 10 0-3 3-7 3-10 0z" fill="#1d3f66"/>',
  hideSel: '<path d="M.5 2.500h15v11H.5z" fill="#eef2f6" stroke="#33475c" stroke-width="1.300"/><path d="M4 8.500c3-2 5-2 8 0-3 2-5 2-8 0z" fill="#9aa5b0"/><path d="M6 5l5 6" stroke="#4a525a"/>',
  viewHid: '<path d="M1 1.500h14v13H1z" fill="#fff" stroke="#33475c" stroke-width="1.300"/><path d="M1 4h14" stroke="#33475c" stroke-width="2"/><path d="M4 8h8l-3 2.500h-2zM5 12.500h6" fill="#33475c" stroke="#33475c"/>',
  resetHid: '<path d="M4 4a5.500 5.500 0 1 1-1.500 6" fill="none" stroke="#33475c" stroke-width="1.600"/><path d="M1 2l1 5.500L7 5z" fill="#33475c"/>',
  light: '<path d="M2 8l7-6v12z" fill="#2a5a9c"/><path d="M11 4c2 2 2 6 0 8" fill="none" stroke="#2a5a9c" stroke-width="1.400"/>',
  transp: '<path d="M1.500 3h10v7h-10z" fill="#eaf2fa" stroke="#5d84aa" stroke-width="1.200"/><path d="M4.500 6h10v7h-10z" fill="#d6e6f4" fill-opacity=".7" stroke="#5d84aa" stroke-width="1.200"/>',
  wire: '<path d="M2 5h9v8H2zM5 3h9v8H5zM2 5l3-2M11 13l3-2M2 13l3-2" fill="none" stroke="#1f4a80" stroke-width="1.100"/>',
  meshRen: '<path d="M8 2l6 11H2zM5 7.500h6L8 13z" fill="#fff" fill-opacity=".5" stroke="#1f4a80" stroke-width="1.100"/>',
  scene: '<path d="M1 3l4-2h9v9l-3 2H1z" fill="#9db4cc" stroke="#5a6a7c"/><path d="M1 4h10v8M11 4l3-3" fill="none" stroke="#5a6a7c"/><path d="M9 9h6v6H9z" fill="#e05a30"/><path d="M10.500 10.500l3 3M13.500 10.500l-3 3" stroke="#fff"/>',
  palette: '<path d="M8 1a7 7 0 1 0 0 14c3 0 1-3 3-4s4 0 4-3a7 7 0 0 0-7-7z" fill="#e9e4dc" stroke="#5b6670"/><circle cx="5" cy="6" r="1.300" fill="#c2185b"/><circle cx="9" cy="4" r="1.300" fill="#3f78b5"/><circle cx="5" cy="10.500" r="1.300" fill="#4c9a3a"/><path d="M7 13l6-8" stroke="#e0a52c" stroke-width="1.600"/>',
  photo: '<path d="M0 4h4l1-2h6l1 2h4v10H0z" fill="#2f6aa5"/><circle cx="8" cy="9" r="3.700" fill="#fff"/><circle cx="8" cy="9" r="2.300" fill="#2f6aa5"/>',
  print: '<path d="M3.500 1h9v6h-9z" fill="#fff" stroke="#2f6aa5"/><path d="M1 6h14v6H1z" fill="#2f6aa5"/><path d="M3 10h10v5H3z" fill="#7fb0d8" stroke="#2f6aa5"/>',
  // table toolbar
  tprec: '<path d="M1 1.500h14v13H1z" fill="#eee" stroke="#999"/><path d="M3 4.500h2M7 4.500h2M11 4.500h2M4 8v5M8 8v5M12 8v5M1 6.500h14" stroke="#888" stroke-width="1.300"/>',
  tfull: note('8.85', '#888', 7, 7) + note('e-12', '#888', 7, 14),
  tauto: '<path d="M0 0h16v5H0z" fill="#4d86c4"/>' + note('AUTO', '#3d6ea8', 6, 12),
  tsci: note('8.5', '#888', 7, 7) + note('e-2', '#888', 7, 14),
  teng: note('850', '#888', 7, 7) + note('e-3', '#888', 7, 14),
  tdec: note('0.85', '#888', 7, 11),
  tgrid: '<path d="M0 0h16v5H0z" fill="#4d86c4"/><path d="M1.500 5h13v9h-13z" fill="#eaf4fc"/><path d="M1 8h14M1 11h14M4.500 5v9M8 5v9M11.500 5v9" stroke="#6b9bc9"/>',
  tpolar: '<circle cx="8" cy="8" r="6.500" fill="#ddd" stroke="#aaa"/><circle cx="8" cy="8" r="3" fill="none" stroke="#aaa"/><path d="M8 1.500v13M1.500 8h13M3.500 3.500l9 9M12.500 3.500l-9 9" stroke="#aaa" stroke-width=".8"/>',
  tbroom: '<path d="M4 1l4 8" stroke="#aaa" stroke-width="1.300"/><path d="M7 8l3-1 2 6-4 2z" fill="#ddd" stroke="#999"/>',
  ttrash: '<path d="M4 4h8v11H4zM2.500 3.500h11M6.500 1.500h3M6.500 6v7M9.500 6v7" fill="none" stroke="#999" stroke-width="1.100"/>',
  trows: '<path d="M2 2v13" stroke="#888" stroke-width="1.500"/><path d="M2 3h12v4H2zM2 7h12v3H2zM2 10h12v4H2z" fill="#eee" stroke="#999"/>',
  tfill: '<path d="M1 1h14v14H1z" fill="#a3a3a3" stroke="#8f8f8f"/>',
  tcopy: '<path d="M1 1.500h8v9H1zM6 5h9v9H6z" fill="#f2f2f2" stroke="#999"/><path d="M6 8h9M9 5v9M12 5v9" stroke="#999"/>',
  texport: '<path d="M12 6V2.500H1v11h11V10" fill="none" stroke="#999"/><path d="M1 5h11M6 8h9M13 6l2.500 2L13 10" fill="none" stroke="#999" stroke-width="1.200"/>',
  tred: '<path d="M1.500 1.500h13v13h-13z" fill="#f0c8d8" stroke="#7a1844" stroke-width="1.500"/><path d="M1 5.500h14M1 10h14M5.500 1v14M10 1v14" stroke="#8f1c50" stroke-width="1.500"/>'
};
</script>

<style scoped>
.app {
  position: relative;
  display: flex;
  flex-direction: column;
  height: 100vh;
  overflow: hidden;
  background: #fbfbfd;
  color: #1a1a1a;
  font: 12px/16px "Open Sans", "Noto Sans CJK SC", sans-serif;
}

button {
  padding: 0;
  border: 0;
  background: none;
  color: inherit;
  font: inherit;
}

h1, h2, h3, h4, p, ul {
  margin: 0;
  padding: 0;
  font-weight: 400;
  list-style: none;
}

.ic {
  flex: none;
  width: 16px;
  height: 16px;
}

/* Title bar */
.titlebar {
  display: flex;
  align-items: flex-end;
  height: 11px;
  background: linear-gradient(90deg, #c9d8ea, #a9c0dc 40%, #b9cce3);
  overflow: hidden;
}

.quick {
  display: flex;
  gap: 9px;
  width: 358px;
}

.quick-more {
  width: 18px;
  border-right: 1px solid #8fa6c2;
  text-align: center;
  line-height: 14px;
  font-size: 10px;
}

.titlebar h1 {
  flex: 1;
  padding-left: 52px;
  text-align: center;
  font-size: 12px;
  line-height: 17px;
}

.win-btns {
  display: flex;
  width: 86px;
  padding-bottom: 2px;
}

.win-btns button {
  width: 28px;
  height: 12px;
  border: 1px solid #6f8199;
  border-radius: 0 0 3px 3px;
  background: #d5e0ee;
}

.win-btns .close {
  background: #cf6a55;
}

/* Ribbon tabs */
.tabs {
  display: flex;
  align-items: flex-end;
  height: 28px;
  border-bottom: 1px solid #cfd3da;
  background: #fdfdfe;
}

.file {
  align-self: flex-start;
  width: 52px;
  height: 23px;
  margin: 3px 1px 0 0;
  background: #2a4b98;
  color: #fff;
}

.tab {
  height: 23px;
  padding: 0 13px;
  color: #35507c;
}

.tab.active {
  margin-bottom: -1px;
  padding: 0 12px;
  border: 1px solid #cfd3da;
  border-bottom: 0;
  background: #fdfdfe;
}

.help {
  width: 14px;
  height: 14px;
  margin: 0 1px 7px auto;
  background: #2f6eb0;
  color: #fff;
  font-size: 10px;
  line-height: 14px;
}

/* Ribbon */
.ribbon {
  display: flex;
  height: 89px;
  border-bottom: 2px solid #d2d4da;
  background: #fcfcfe;
  box-sizing: border-box;
}

.group {
  display: flex;
  flex-direction: column;
  margin: 5px 0 2px;
  padding: 0 6px 0 5px;
  background: linear-gradient(#b9bec8, #b9bec8) right top / 1px 76px no-repeat;
}

.group.wide {
  width: 270px;
  align-items: flex-end;
}

.group.wide .group-body {
  padding-top: 18px;
}

.group.wide .big {
  flex-direction: row;
  align-items: center;
  min-width: 0;
}

.group-body {
  display: flex;
  flex: 1;
  padding-top: 4px;
}

.big {
  display: flex;
  flex-direction: column;
  align-items: center;
  min-width: 45px;
  padding: 0 4px;
  white-space: nowrap;
}

.ic26 {
  width: 26px;
  height: 26px;
  margin-bottom: 5px;
  overflow: visible;
}

.line {
  line-height: 13px;
}

.caret {
  display: inline-block;
  margin: 0 0 2px 3px;
  border: 3px solid transparent;
  border-top: 4px solid #222;
  border-bottom: 0;
}

.caret.below {
  margin: 5px 0 0;
}

.wide .caret.below {
  margin: 0 0 0 5px;
}

.big.off {
  color: #b4b4b8;
}

.off .caret {
  border-top-color: #b4b4b8;
}

.group-name {
  height: 14px;
  color: #8c8c90;
  line-height: 14px;
  text-align: center;
}

/* Work area */
.work {
  display: grid;
  grid-template-columns: minmax(0, 379fr) minmax(0, 487fr) minmax(0, 1029fr);
  gap: 6px;
  flex: 1;
  min-height: 0;
  padding: 5px 0 4px;
}

.panel {
  display: flex;
  flex-direction: column;
  min-height: 0;
  border: 1px solid #cdd0d8;
  background: #fdfdff;
}

.panel-head {
  display: flex;
  align-items: center;
  justify-content: space-between;
  flex: none;
  height: 24px;
  padding: 4px 4px 2px 7px;
}

.work > .panel:first-child {
  border-left: 0;
}

.work > .panel:first-child .panel-head {
  padding-right: 0;
  padding-left: 3px;
}

.panel-head h2 {
  color: #27457a;
  font-size: 21px;
  line-height: 24px;
}

.panel-head h2.light {
  color: #2e76b4;
}

.pins {
  width: 24px;
  height: 12px;
  color: #c2c5cb;
}

.pins.dark {
  color: #444;
}

.toolbar {
  display: flex;
  align-items: center;
  flex: none;
  height: 24px;
}

.tool {
  display: flex;
  align-items: center;
  justify-content: center;
  width: 24px;
  height: 24px;
}

.ic.on {
  outline: 2px solid #3a6ba5;
  outline-offset: -1px;
  border-radius: 2px;
  background: #b5d6f2;
}

.tsep {
  width: 1px;
  height: 16px;
  margin: 0 8px 0 7px;
  background: #d0d3d8;
}

.tdrop {
  margin: 0 7px 0 2px;
  border: 5px solid transparent;
  border-top-color: #222;
  border-bottom: 0;
}

/* Tree */
.tree {
  flex: 1;
  min-height: 0;
  margin: 1px 4px 8px 1px;
  border: 1px solid #d8dae0;
  background: #fff;
  overflow: hidden;
}

.tree li {
  display: flex;
  align-items: center;
  height: 20px;
  white-space: nowrap;
}

.tree li.sel {
  background: #dcdce0;
}

.tree li.off {
  color: #77777b;
}

.tree .ic {
  margin: 0 5px 0 4px;
}

.tree em {
  margin-left: 8px;
}

.fold {
  flex: none;
  width: 7px;
  height: 7px;
  margin: 0 4px 0 4px;
}

.fold.open {
  background: linear-gradient(135deg, transparent 50%, #222 50%);
}

.fold.shut {
  background: #8a8a90;
  clip-path: polygon(evenodd, 1px 0, 6px 50%, 1px 100%, 1px 0, 2px 2px, 2px 5px, 5px 50%, 2px 2px);
}

/* Settings */
.settings h3 {
  padding-left: 6px;
  color: #27457a;
  font-size: 15px;
  line-height: 26px;
}

.actions {
  display: flex;
  gap: 9px;
  padding-left: 6px;
}

.actions button {
  display: flex;
  gap: 3px;
}

.label-row {
  display: flex;
  align-items: center;
  margin: 14px 4px 10px 5px;
}

.label-row label {
  width: 37px;
}

.label-row input {
  flex: 1;
  box-sizing: border-box;
  height: 23px;
  padding: 0 3px;
  border: 1px solid #c9ccd2;
  background: #fff;
  color: inherit;
  font: inherit;
}

.rename {
  display: flex;
  align-items: center;
  justify-content: center;
  box-sizing: border-box;
  width: 22px;
  height: 23px;
  margin-left: 8px;
  border: 1px solid #8f949b;
  border-radius: 2px;
  background: #f4f4f6;
}

.settings h4 {
  padding-left: 26px;
  background: #dfe7f4;
  font-size: 12px;
  font-weight: 700;
  line-height: 26px;
}

.checks {
  padding: 5px 6px 7px;
}

.checks label {
  display: flex;
  align-items: center;
  height: 24px;
}

.checks input {
  width: 13px;
  height: 13px;
  margin: 0 3px 0 0;
}

.info {
  padding: 6px 5px;
  line-height: 24px;
}

/* Graphics and output */
.right {
  display: grid;
  grid-template-rows: minmax(0, 663fr) minmax(0, 238fr);
  gap: 4px;
  min-height: 0;
}

.right .panel {
  border-right: 0;
}

.right .panel-head {
  padding-right: 0;
}

.canvas {
  flex: 1;
  min-height: 0;
  background: linear-gradient(#fbfbff, #e9f4fe 50%, #d9ebfc);
}

.canvas svg {
  display: block;
  width: 100%;
  height: 100%;
}

.out-tabs {
  display: flex;
  align-items: flex-end;
  gap: 8px;
  height: 29px;
  padding: 0 0 0 4px;
  border-bottom: 1px solid #d8dae0;
}

.out-tabs button {
  height: 23px;
  margin-bottom: 1px;
  padding: 0 4px;
  background: #ececee;
  font-size: 13px;
}

.out-tabs button.active {
  height: 25px;
  margin-bottom: -1px;
  border: 1px solid #d8dae0;
  border-bottom: 0;
  background: #fdfdff;
  color: #27457a;
}

.out-tabs span {
  margin-left: 9px;
  color: #b9bcc2;
  font-size: 12px;
}

.out-tabs .pins {
  margin: 0 0 5px auto;
}

.output .toolbar {
  height: 34px;
  padding-left: 5px;
}

/* Status bar */
.status {
  position: relative;
  display: grid;
  grid-template-columns: 1322fr 584fr;
  flex: none;
  height: 23px;
  background: #f1eded;
}

.status span {
  padding-top: 7px;
  line-height: 16px;
  text-align: right;
}

.status small {
  position: absolute;
  top: -7px;
  right: 10px;
  color: #fff;
  font: 16px/24px "Liberation Sans", sans-serif;
  text-shadow: 0 0 2px #aaa;
}

/* Menus */
.menu {
  position: absolute;
  box-sizing: border-box;
  padding: 1px;
  border: 1px solid #9b9b9f;
  background: linear-gradient(90deg, #efeff1 30px, #e4e4e6 30px, #e4e4e6 31px, #f6f6f7 31px);
  box-shadow: 2px 2px 2px #55555a;
}

.main-menu {
  top: -5px;
  left: 121px;
  width: 237px;
}

.step-menu {
  top: 262px;
  left: 352px;
  width: 145px;
}

.other-menu {
  top: 358px;
  left: 184px;
  width: 170px;
}

.menu button {
  display: flex;
  align-items: center;
  box-sizing: border-box;
  width: 100%;
  height: 24px;
  padding: 0 9px 0 5px;
  border: 1px solid transparent;
  text-align: left;
}

.menu button.hot {
  border-color: #b5dde9;
  background: #e4f1f6;
}

.mtext {
  flex: 1;
  margin-left: 10px;
}

.key {
  width: 31px;
}

.more {
  border: 4px solid transparent;
  border-left: 5px solid #111;
  border-right: 0;
}

.msep {
  height: 2px;
  margin: 0 2px 0 34px;
  border-bottom: 1px solid #bdbdc0;
}

.pointer {
  position: absolute;
  top: 372px;
  left: 479px;
  width: 12px;
  height: 18px;
}
</style>

<style>
body {
  margin: 0;
  background: #fbfbfd;
}
</style>
